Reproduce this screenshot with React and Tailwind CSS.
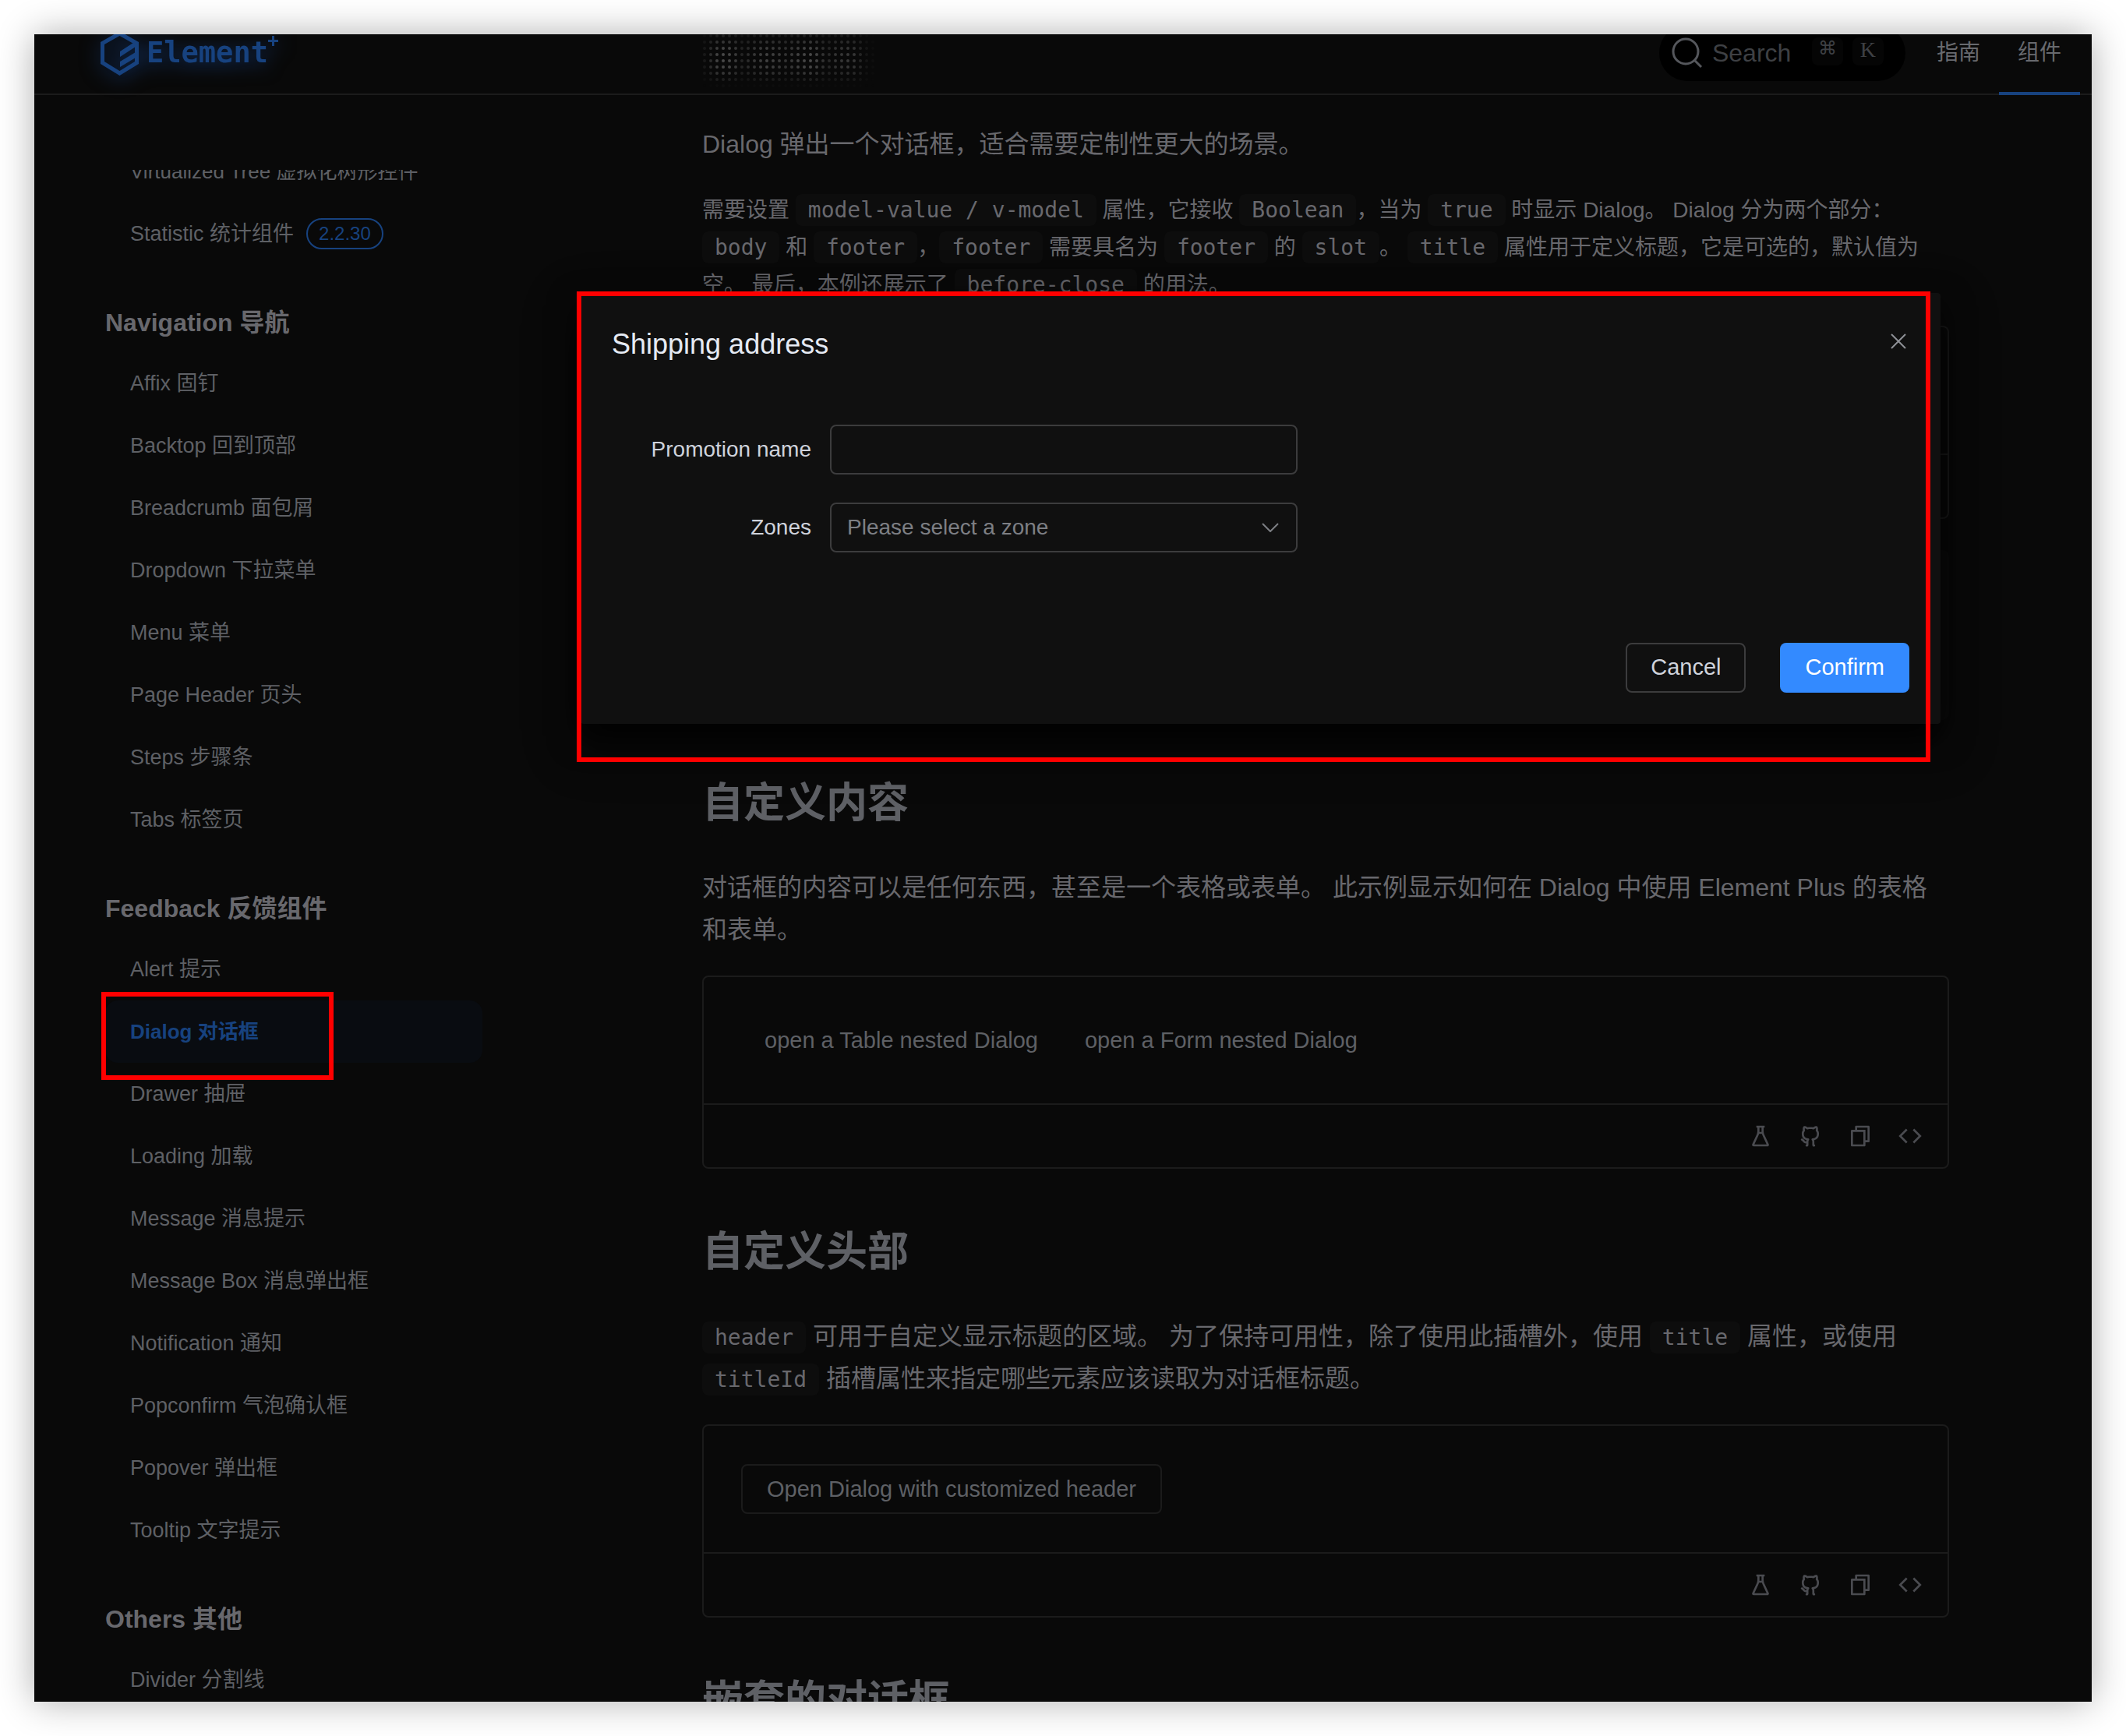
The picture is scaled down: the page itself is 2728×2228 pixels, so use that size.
import React, { useState } from 'react';
import { RiFlaskLine, RiGithubLine, RiFileCopyLine, RiCodeLine } from 'react-icons/ri';

const navigation = [
  'Affix 固钉',
  'Backtop 回到顶部',
  'Breadcrumb 面包屑',
  'Dropdown 下拉菜单',
  'Menu 菜单',
  'Page Header 页头',
  'Steps 步骤条',
  'Tabs 标签页',
];

const feedback = [
  'Alert 提示',
  'Dialog 对话框',
  'Drawer 抽屉',
  'Loading 加载',
  'Message 消息提示',
  'Message Box 消息弹出框',
  'Notification 通知',
  'Popconfirm 气泡确认框',
  'Popover 弹出框',
  'Tooltip 文字提示',
];

const others = ['Divider 分割线'];

// intensité des points par colonne et par ligne
const dotCols = [0.25, 0.55, 0.9, 1, 0.95, 0.75, 0.45, 0.55, 0.7, 0.8, 0.9, 0.85, 0.75, 0.65, 0.75, 0.9, 0.95, 1, 0.9, 0.65, 0.5, 0.65, 0.7, 0.75, 0.7, 0.45, 0.2, 0.08];
const dotRows = [0.35, 0.7, 0.9, 1, 1, 0.95, 0.7, 0.35, 0.08];

const Dots = () => (
  <svg width="224" height="76" viewBox="0 0 224 76" aria-hidden="true">
    {dotRows.map((r, y) =>
      dotCols.map((c, x) => (
        <circle key={`${x}-${y}`} cx={x * 8 + 4} cy={y * 8 + 4} r="2" fill="#484848" opacity={r * c} />
      ))
    )}
  </svg>
);

const Logo = () => (
  <a href="#" className="flex items-center gap-[10px] text-[#17427f] drop-shadow-[0_4px_12px_rgba(24,80,170,0.6)]">
    <svg width="49" height="57" viewBox="0 0 49 57" fill="currentColor" aria-hidden="true">
      <path fillRule="evenodd" d="M24.5 0 49 14v28L24.5 57 0 42V14Zm0 6L5 17v22l19.500 12L44 39V17Z" />
      <path d="M25 26 45 13v7L25 33Z" />
      <path d="M25 39 45 27v7L25 46Z" />
    </svg>
    <span className="flex items-start">
      <span className="text-[37px] leading-[44px] font-bold font-['DejaVu_Sans_Mono',monospace]">Element</span>
      <svg width="13" height="13" viewBox="0 0 13 13" fill="currentColor" aria-hidden="true">
        <path d="M5 0h3v5h5v3H8v5H5V8H0V5h5z" />
      </svg>
    </span>
  </a>
);

const Code = ({ children }) => (
  <code className="px-4 py-1 rounded-lg bg-[#0d0d0d] text-[28px] leading-none font-['DejaVu_Sans_Mono',monospace]">
    {children}
  </code>
);

const Group = ({ title, items, active }) => (
  <section className="mt-[50px]">
    <h2 className="mb-[14px] text-[32px] leading-[48px] font-bold text-[#68686d]">{title}</h2>
    {items.map((item) => (
      <a
        key={item}
        href="#"
        className={
          item === active
            ? 'flex items-center h-20 px-8 rounded-2xl bg-[#090c11] text-[26px] font-bold text-[#17427f]'
            : 'flex items-center h-20 px-8 text-[27px] text-[#5e6065]'
        }
      >
        {item}
      </a>
    ))}
  </section>
);

const Demo = ({ children }) => (
  <div className="border-2 border-[#1b1b1b] rounded-lg">
    <div className="flex px-12 py-[49px]">{children}</div>
    <div className="flex items-center justify-end gap-8 h-[82px] pr-8 border-t-2 border-[#1b1b1b] text-[#4a4b50]">
      <button type="button" aria-label="Playground"><RiFlaskLine size={32} /></button>
      <button type="button" aria-label="GitHub"><RiGithubLine size={32} /></button>
      <button type="button" aria-label="Copy"><RiFileCopyLine size={32} /></button>
      <button type="button" aria-label="Code"><RiCodeLine size={32} /></button>
    </div>
  </div>
);

const ShippingDialog = () => {
  const [form, setForm] = useState({ name: '', region: '' });

  const handleChange = (e) => {
    const { name, value } = e.target;
    setForm((form) => ({ ...form, [name]: value }));
  };

  return (
    <div
      role="dialog"
      aria-labelledby="dialog-title"
      className="absolute left-[701px] right-[194px] top-[332px] rounded bg-[#101010] shadow-[0_24px_64px_8px_rgba(0,0,0,0.36),0_16px_40px_rgba(0,0,0,0.72)]"
    >
      <div className="flex items-start justify-between px-10 pt-10">
        <h3 id="dialog-title" className="text-[36px] leading-[52px] text-[#e5eaf3]">Shipping address</h3>
        <button type="button" aria-label="Close" className="pt-3 pr-1">
          <svg width="20" height="20" viewBox="0 0 20 20" fill="none" stroke="#8f9197" strokeWidth="2">
            <path d="M1 1 19 19M19 1 1 19" />
          </svg>
        </button>
      </div>

      <form className="flex flex-col gap-9 px-10 pt-[77px] text-[28px]">
        <div className="flex items-center">
          <label htmlFor="name" className="w-[280px] pr-6 text-right text-[#cfd3dc]">Promotion name</label>
          <input
            id="name"
            name="name"
            value={form.name}
            onChange={handleChange}
            className="w-[600px] h-16 px-5 bg-transparent border-2 border-[#3c3c3d] rounded-lg text-[#cfd3dc]"
          />
        </div>
        <div className="flex items-center">
          <label htmlFor="region" className="w-[280px] pr-6 text-right text-[#cfd3dc]">Zones</label>
          <div className="relative w-[600px]">
            <select
              id="region"
              name="region"
              value={form.region}
              onChange={handleChange}
              className="block w-full h-16 px-5 appearance-none bg-transparent border-2 border-[#3c3c3d] rounded-lg text-[#7d7f84]"
            >
              <option value="">Please select a zone</option>
            </select>
            <svg className="absolute right-6 top-[26px] pointer-events-none" width="22" height="12" viewBox="0 0 22 12" fill="none" stroke="#7d7f84" strokeWidth="2">
              <path d="m1 1 10 10L21 1" />
            </svg>
          </div>
        </div>
      </form>

      <div className="flex justify-end gap-11 px-10 pt-[116px] pb-10 text-[29px]">
        <button type="button" className="h-16 px-[30px] border-2 border-[#3c3c3d] rounded-lg text-[#cfd3dc]">Cancel</button>
        <button type="button" className="h-16 px-8 rounded-lg bg-[#338aff] text-white">Confirm</button>
      </div>
    </div>
  );
};

const App = () => {
  return (
    <div className="h-screen p-11 bg-white overflow-hidden font-['Liberation_Sans','Noto_Sans_CJK_SC',sans-serif]">
      <div className="relative h-full bg-[#090909] shadow-[0_0_44px_rgba(0,0,0,0.32)]">
        <div className="h-full overflow-hidden">
          <header className="flex items-center h-[110px] -mt-8 pt-1 pl-[85px] pr-[15px] border-b-2 border-[#1b1b1b]">
            <div className="w-[771px]">
              <Logo />
            </div>
            <div className="pt-6">
              <Dots />
            </div>
            <div className="flex items-center gap-3 h-[72px] ml-auto mr-4 pl-4 pr-7 rounded-full bg-black">
              <svg width="40" height="40" viewBox="0 0 40 40" fill="none" stroke="#55575c" strokeWidth="3" aria-hidden="true">
                <circle cx="18" cy="18" r="16" />
                <path d="m29 29 9 9" />
              </svg>
              <input
                aria-label="Search"
                placeholder="Search"
                className="w-[116px] bg-transparent text-[32px] leading-[48px] placeholder:text-[#3e4044]"
              />
              <kbd className="flex justify-center w-10 h-9 mb-1 rounded-lg bg-[#050505] text-[24px] leading-[28px] text-[#3e4044] font-['DejaVu_Sans',sans-serif]">⌘</kbd>
              <kbd className="flex justify-center w-10 h-9 mb-1 rounded-lg bg-[#050505] text-[28px] leading-[32px] text-[#3e4044] font-['Liberation_Serif',serif]">K</kbd>
            </div>
            <nav className="flex self-stretch text-[28px] text-[#686a6f]">
              <a href="#" className="flex items-center px-6">指南</a>
              <a href="#" className="flex items-center px-6 -mb-[2px] pt-[2px] border-b-4 border-[#17427f]">组件</a>
            </nav>
          </header>

          <div className="flex">
            <aside className="shrink-0 w-[575px] pl-[91px] pt-24">
              <div className="overflow-hidden">
                <div className="-mt-[38px]">
                  <a href="#" className="flex items-center h-20 px-8 text-[26px] text-[#5e6065]">Virtualized Tree 虚拟化树形控件</a>
                  <a href="#" className="flex items-center gap-4 h-20 px-8 text-[27px] text-[#5e6065]">
                    Statistic 统计组件
                    <span className="px-[14px] border-2 border-[#17427f] rounded-full text-[24px] leading-[36px] text-[#17427f]">2.2.30</span>
                  </a>
                  <Group title="Navigation 导航" items={navigation} />
                  <Group title="Feedback 反馈组件" items={feedback} active="Dialog 对话框" />
                  <Group title="Others 其他" items={others} />
                </div>
              </div>
            </aside>

            <main className="flex-1 min-w-0 pl-[282px] pr-[183px] pt-9 text-[#68686d]">
              <p className="text-[32px] leading-[54px]">Dialog 弹出一个对话框，适合需要定制性更大的场景。</p>
              <p className="mt-[34px] mb-7 text-[28px] leading-[48px]">
                需要设置 <Code>model-value / v-model</Code> 属性，它接收 <Code>Boolean</Code>，当为 <Code>true</Code> 时显示 Dialog。 Dialog 分为两个部分： <Code>body</Code> 和 <Code>footer</Code>，<Code>footer</Code> 需要具名为 <Code>footer</Code> 的 <Code>slot</Code>。 <Code>title</Code> 属性用于定义标题，它是可选的，默认值为空。 最后，本例还展示了 <Code>before-close</Code> 的用法。
              </p>
              <Demo>
                <div className="h-16"></div>
              </Demo>
              <div className="h-[218px] mt-10 rounded-lg bg-[#0c0c0c]"></div>

              <h2 className="mt-[71px] text-[53px] leading-[72px] font-bold text-[#5e6065]">自定义内容</h2>
              <p className="mt-[45px] mb-8 text-[32px] leading-[54px]">
                对话框的内容可以是任何东西，甚至是一个表格或表单。 此示例显示如何在 Dialog 中使用 Element Plus 的表格和表单。
              </p>
              <Demo>
                <button type="button" className="h-16 px-[30px] pt-[2px] text-[29px] text-[#5e6065]">open a Table nested Dialog</button>
                <button type="button" className="h-16 px-[30px] pt-[2px] text-[29px] text-[#5e6065]">open a Form nested Dialog</button>
              </Demo>

              <h2 className="mt-[71px] text-[53px] leading-[72px] font-bold text-[#5e6065]">自定义头部</h2>
              <p className="mt-[45px] mb-8 text-[32px] leading-[54px]">
                <Code>header</Code> 可用于自定义显示标题的区域。 为了保持可用性，除了使用此插槽外，使用 <Code>title</Code> 属性，或使用 <Code>titleId</Code> 插槽属性来指定哪些元素应该读取为对话框标题。
              </p>
              <Demo>
                <button type="button" className="h-16 px-[31px] pt-[2px] border-2 border-[#1b1b1b] rounded-lg text-[29px] text-[#5e6065]">
                  Open Dialog with customized header
                </button>
              </Demo>

              <h2 className="mt-[71px] text-[53px] leading-[72px] font-bold text-[#5e6065]">嵌套的对话框</h2>
            </main>
          </div>
        </div>

        <ShippingDialog />

        {/* cadres rouges */}
        <div className="absolute left-[696px] right-[207px] top-[330px] h-[604px] border-[6px] border-[#ff0000] pointer-events-none"></div>
        <div className="absolute left-[86px] top-[1229px] w-[298px] h-[113px] border-[6px] border-[#ff0000] pointer-events-none"></div>
      </div>
    </div>
  );
};

export default App;
